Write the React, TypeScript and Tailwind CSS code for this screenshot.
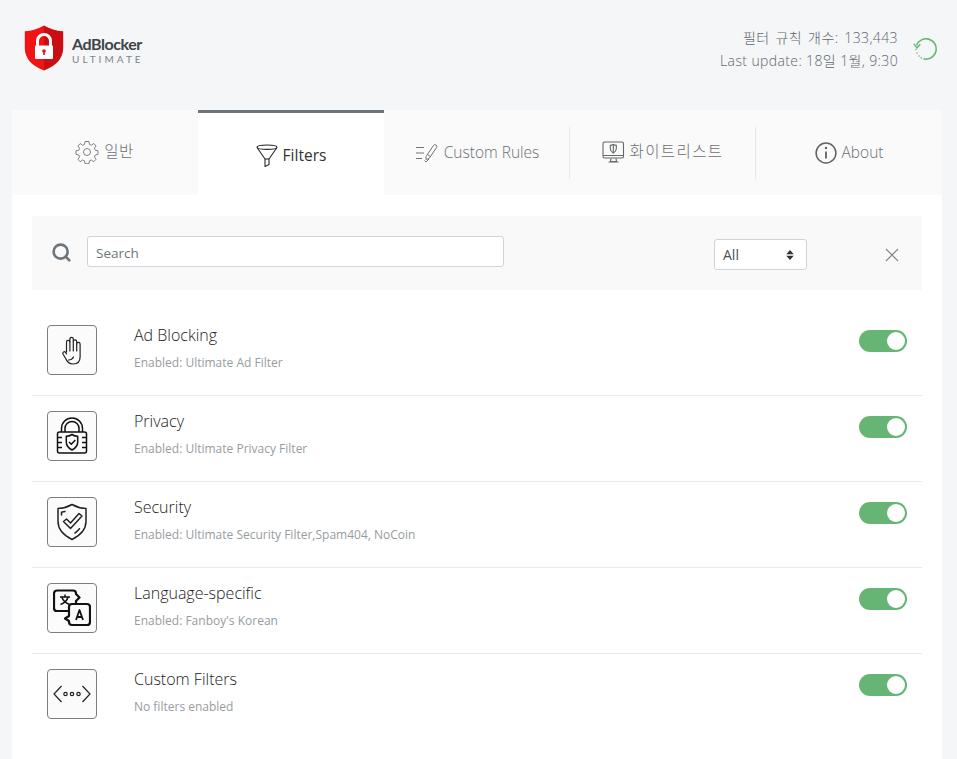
import { Search } from "lucide-react";
import type { ReactNode } from "react";

const font = "font-['Open_Sans','Noto_Sans_CJK_KR',sans-serif]";

function Logo() {
  return (
    <div className="flex items-center gap-[8px]">
      <svg width="40" height="46" viewBox="0 0 40 46">
        <path d="M20 0.5C14 4 8 6 0.8 6.300V23C0.8 34 9 41.500 20 45.500Z" fill="#f01414" />
        <path d="M20 0.5C26 4 32 6 39.200 6.300V23C39.200 34 31 41.500 20 45.500Z" fill="#c90f12" />
        <path d="M13.500 21v-5a6.500 6.500 0 0 1 13 0v5" fill="none" stroke="#fff" strokeWidth="3" />
        <rect x="11" y="20.500" width="18" height="13.500" rx="1" fill="#fff" />
        <circle cx="20" cy="26" r="1.800" fill="#e01014" />
        <rect x="19.200" y="26" width="1.600" height="4" fill="#e01014" />
      </svg>
      <div className="mt-[3px] flex flex-col font-['Lato',sans-serif]">
        <span className="text-[16px] font-bold leading-[19px] tracking-[-0.45px] text-[#3f4347]">AdBlocker</span>
        <span className="text-[10px] leading-[13px] tracking-[3.05px] text-[#7d8488]">ULTIMATE</span>
      </div>
    </div>
  );
}

function RefreshIcon() {
  return (
    <svg width="26" height="26" viewBox="0 0 26 26" fill="none" stroke="#66b574" strokeWidth="1.600">
      <path d="M3.600 9.200A10.200 10.200 0 1 1 13 23.200c-1 0-1.800-.1-2.600-.4" />
      <path d="M0.800 7.600 4 11.800 7.300 8.200" strokeWidth="1.400" />
      <path d="M3 13.400v.1M4 17v.1M6 20v.1M8.200 21.800v.1" strokeLinecap="round" strokeWidth="1.500" />
    </svg>
  );
}

function GearIcon() {
  return (
    <svg width="24" height="24" viewBox="0 0 24 24" fill="none" stroke="#707476" strokeWidth="0.900" strokeLinejoin="round">
      <path d="M10 1.500h4l.5 2.900 1.900.8 2.400-1.700 2.300 2.500-1.700 2.300.8 1.900 2.800.6v3.600l-2.800.6-.8 1.900 1.700 2.300-2.300 2.500-2.400-1.700-1.900.8-.5 2.900h-4l-.5-2.900-1.900-.8-2.400 1.700-2.300-2.500 1.700-2.300-.8-1.900-2.800-.6v-3.600l2.800-.6.8-1.900-1.700-2.300 2.300-2.500 2.400 1.700 1.900-.8Z" />
      <circle cx="12" cy="12" r="3.500" />
    </svg>
  );
}

function FunnelIcon() {
  return (
    <svg width="22" height="24" viewBox="0 0 22 24" fill="none" stroke="#2a2a2a" strokeWidth="1.100" strokeLinejoin="round">
      <ellipse cx="11" cy="3.200" rx="10" ry="2.200" />
      <path d="M1 3.500 9 15v7.500l4-2V15l8-11.500" />
      <path d="M9 15h4" />
    </svg>
  );
}

function RulesIcon() {
  return (
    <svg width="24" height="20" viewBox="0 0 24 20" fill="none" stroke="#707476" strokeWidth="1">
      <path d="M1 4.500h8M1 10h8M1 15.500h6" />
      <path d="M11 13.500 18.500 2.500a1.800 1.800 0 0 1 3 2L14 15.500l-3 1Z" strokeLinejoin="round" />
      <path d="M12.500 11.500l3 2" />
      <path d="M9.500 17.500l1.500 1.500 3-3" />
    </svg>
  );
}

function MonitorIcon() {
  return (
    <svg width="23" height="23" viewBox="0 0 23 23" fill="none" stroke="#646869" strokeWidth="1.100">
      <rect x="1" y="1" width="20.500" height="16" rx="1.500" />
      <path d="M1 14.500h20.500M9 17.500l-.5 3h6l-.5-3M6.500 21h10" />
      <path d="M11.300 3.500c1.100.7 2 .9 3 .9v3.300c0 2-1.300 3.300-3 4.300-1.700-1-3-2.300-3-4.300V4.400c1 0 1.900-.2 3-.9Z" />
      <path d="M11.300 3.500v8.500" />
    </svg>
  );
}

function InfoIcon() {
  return (
    <svg width="22" height="22" viewBox="0 0 22 22" fill="none" stroke="#5e6264" strokeWidth="1.500">
      <circle cx="11" cy="11" r="9.900" />
      <path d="M11 9.500v7" strokeWidth="1.800" />
      <circle cx="11" cy="6" r="1.200" fill="#5e6264" stroke="none" />
    </svg>
  );
}

function Tab({ icon, label, active, divider, nudge, text }: { icon: ReactNode; label: string; active?: boolean; divider?: boolean; nudge?: string; text?: string }) {
  if (active) {
    return (
      <div className="flex w-[186px] items-center justify-center gap-[5px] border-t-[3px] border-[#6c757b] bg-white pt-[3px] text-[15.500px] text-[#333]">
        {icon}
        <span>{label}</span>
      </div>
    );
  }
  return (
    <div className="relative flex w-[186px] items-center justify-center text-[15.500px] font-light text-[#6b6f72]">
      <div className={`flex items-center gap-[5px] ${nudge ?? ""}`}>
        {icon}
        <span className={text}>{label}</span>
      </div>
      {divider && <div className="absolute right-0 top-[17px] h-[52px] w-px bg-[#e6e8e9]" />}
    </div>
  );
}

function HandIcon() {
  return (
    <svg width="21" height="29" viewBox="0 0 21 29" fill="none" stroke="#222" strokeWidth="1.200" strokeLinecap="round" strokeLinejoin="round">
      <path d="M4.500 16V6a1.700 1.700 0 0 1 3.400 0V3a1.700 1.700 0 0 1 3.400 0v2.500a1.700 1.700 0 0 1 3.400 0V8a1.700 1.700 0 0 1 3.400 0v13c0 4.500-2.600 7-7 7-3.700 0-6-1.800-7.400-5.500L1 18c-.7-1.800 1.500-3.200 2.500-1.700l1 1.700" />
      <path d="M7.900 6v9M11.300 5.500V15M14.700 8v7" />
      <path d="M6.500 24c2.300 0 4-1 5-3" />
    </svg>
  );
}

function LockIcon() {
  return (
    <svg width="32" height="38" viewBox="0 0 32 38" fill="none" stroke="#111" strokeWidth="1.500" strokeLinejoin="round">
      <path d="M5.500 15V11.500a10.500 10.500 0 0 1 21 0V15" />
      <path d="M9 15V11.500a7 7 0 0 1 14 0V15" />
      <rect x="1.500" y="15" width="29" height="21" rx="2" />
      <path d="M1.500 20.500H6M1.500 25.500H6M1.500 30.500H6M26 20.500h4.500M26 25.500h4.500M26 30.500h4.500" />
      <path d="M16 17.500c2 1.300 3.800 1.800 5.700 1.800v6c0 3.700-2.500 6-5.700 7.700-3.200-1.700-5.700-4-5.700-7.700v-6c1.900 0 3.700-.5 5.700-1.800Z" />
      <path d="M13 25l2.300 2.300 4-4.300" />
    </svg>
  );
}

function ShieldIcon() {
  return (
    <svg width="32" height="38" viewBox="0 0 32 38" fill="none" stroke="#222" strokeWidth="1.500" strokeLinecap="round" strokeLinejoin="round">
      <path d="M16 1.500c4.500 2.500 9 3.800 14 4v13c0 8.500-6 14-14 18-8-4-14-9.500-14-18v-13c5-.2 9.500-1.500 14-4Z" />
      <path d="M5.500 12V9.200c1.200-.2 2.400-.4 3.500-.7" />
      <path d="M7.500 18.500l7 7L26 13l-3-2.500-8.500 9.500-4-4Z" />
      <path d="M19 30c2-1.300 3.500-2.700 4.500-4.300" />
    </svg>
  );
}

function TranslateIcon() {
  return (
    <svg width="38" height="38" viewBox="0 0 38 38" fill="none" stroke="#111" strokeWidth="2.200" strokeLinejoin="round">
      <path d="M4 1.500h16a3 3 0 0 1 3 3v.5l3.500 3.500L23 12v7a3 3 0 0 1-3 3H4a3 3 0 0 1-3-3V4.500a3 3 0 0 1 3-3Z" />
      <path d="M19 15h15a3 3 0 0 1 3 3v15a3 3 0 0 1-3 3H19a3 3 0 0 1-3-3v-1l-4-2.500 4-2.500V18a3 3 0 0 1 3-3Z" fill="#fbfbfb" />
      <path d="M7 8h10M12 5.500V8M15 8c-.8 3.500-3.500 6-7.500 7.500M9 8.500c1 3 3.500 5.500 7.500 7" strokeWidth="1.500" />
      <path d="M23 31l3.500-10 3.500 10M24.200 28h4.600" strokeWidth="1.800" />
    </svg>
  );
}

function CodeIcon() {
  return (
    <svg width="38" height="18" viewBox="0 0 38 18" fill="none" stroke="#222" strokeWidth="1.200">
      <path d="M8.500 1 1 9l7.500 8M29.500 1 37 9l-7.500 8" />
      <circle cx="12.500" cy="9" r="1.700" />
      <circle cx="19" cy="9" r="1.700" />
      <circle cx="25.500" cy="9" r="1.700" />
    </svg>
  );
}

function Toggle() {
  return (
    <div className="flex h-[22px] w-[48px] items-center justify-end rounded-full bg-[#66b574] pr-[2px]">
      <div className="h-[18px] w-[18px] rounded-full bg-white" />
    </div>
  );
}

function FilterRow({ icon, title, sub, last }: { icon: ReactNode; title: string; sub: string; last?: boolean }) {
  return (
    <div className={`flex h-[86px] items-start pl-[15px] pr-[15px] pt-[15px] ${last ? "" : "border-b border-[#e8e9ea]"}`}>
      <div className="flex h-[50px] w-[50px] shrink-0 items-center justify-center rounded-[4px] border border-[#7b7f82] bg-[#fbfbfb]">
        {icon}
      </div>
      <div className="ml-[37px] flex-1">
        <div className="-mt-[1px] text-[16px] font-light leading-[22px] text-[#222]">{title}</div>
        <div className="mt-[8px] text-[12px] leading-[18px] text-[#989c9e]">{sub}</div>
      </div>
      <div className="mt-[5px]">
        <Toggle />
      </div>
    </div>
  );
}

export default function App() {
  return (
    <div className={`${font} flex h-[759px] w-full flex-col overflow-hidden bg-[#f4f6f8] pl-[12px] pr-[15px]`}>
      {/* header */}
      <header className="flex h-[110px] shrink-0 items-start justify-between">
        <div className="ml-[12px] mt-[25px]">
          <Logo />
        </div>
        <div className="mr-[3px] mt-[26px] flex items-center gap-[15px]">
          <div className="text-right text-[14px] font-light leading-[23px] tracking-[0.38px] text-[#62666a]">
            <div className="[word-spacing:2px]">필터 규칙 개수: 133,443</div>
            <div>Last update: 18일 1월, 9:30</div>
          </div>
          <RefreshIcon />
        </div>
      </header>

      <main className="flex flex-1 flex-col bg-white">
        {/* tabs */}
        <nav className="flex h-[85px] shrink-0 bg-[#fafafa]">
          <Tab icon={<GearIcon />} label="일반" nudge="-mt-[1px] -ml-[1px]" text="tracking-[0.5px]" />
          <Tab icon={<FunnelIcon />} label="Filters" active />
          <Tab icon={<RulesIcon />} label="Custom Rules" divider />
          <Tab icon={<MonitorIcon />} label="화이트리스트" divider nudge="-mt-[1px] -ml-[1px]" text="tracking-[1.400px]" />
          <Tab icon={<InfoIcon />} label="About" />
        </nav>

        <div className="px-[20px] pt-[21px]">
          {/* search */}
          <div className="flex h-[74px] items-center bg-[#f9f9f9] pl-[20px] pr-[23px]">
            <Search size={21} strokeWidth={3} className="-ml-[1px] -mt-[2px] text-[#6c757b]" />
            <input
              readOnly
              placeholder="Search"
              className="-mt-[3px] ml-[15px] h-[31px] w-[417px] rounded-[3px] border border-[#ced4da] bg-white px-[8px] pt-[2px] text-[13.500px] text-[#495057] outline-none placeholder:text-[#6c757b]"
            />
            <div className="ml-[210px] mt-[3px] flex h-[31px] w-[93px] items-center justify-between rounded-[3px] border border-[#ced4da] bg-white pl-[8px] pr-[12px] text-[14px] text-[#495057]">
              <span>All</span>
              <svg width="8" height="10" viewBox="0 0 9 12" fill="#333">
                <path d="M4.500 0 9 5H0ZM0 7h9l-4.500 5Z" />
              </svg>
            </div>
            <svg className="ml-auto mt-[3px]" width="14" height="14" viewBox="0 0 14 14" fill="none" stroke="#85898c" strokeWidth="1.200">
              <path d="M1 1l12 12M13 1 1 13" />
            </svg>
          </div>

          {/* filter groups */}
          <div className="mt-[20px]">
            <FilterRow icon={<HandIcon />} title="Ad Blocking" sub="Enabled: Ultimate Ad Filter" />
            <FilterRow icon={<LockIcon />} title="Privacy" sub="Enabled: Ultimate Privacy Filter" />
            <FilterRow icon={<ShieldIcon />} title="Security" sub="Enabled: Ultimate Security Filter,Spam404, NoCoin" />
            <FilterRow icon={<TranslateIcon />} title="Language-specific" sub="Enabled: Fanboy's Korean" />
            <FilterRow icon={<CodeIcon />} title="Custom Filters" sub="No filters enabled" last />
          </div>
        </div>
      </main>
    </div>
  );
}
